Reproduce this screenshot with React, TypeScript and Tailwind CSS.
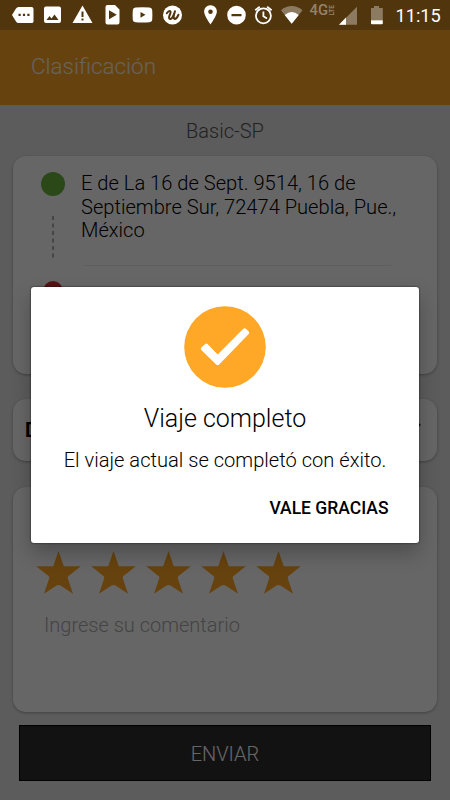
import React from 'react';

const STARS = [1, 2, 3, 4, 5];

/** Left side of the status bar: pending notifications */
const NotificationIcons: React.FC = () => (
  <svg width="185" height="30" viewBox="0 0 185 30" fill="white">
    <path fillRule="evenodd" d="M18.5 7H31.5Q33.5 7 33.5 9V21.500Q33.500 23 31.500 23H18.500Q17 23 16 21.500L12 15L16 8.500Q17 7 18.500 7ZM18.500 13.700V16H20.700V13.700ZM22.900 13.700V16H25.100V13.700ZM27.300 13.700V16H29.500V13.700Z" />
    <path fillRule="evenodd" d="M46 6.500H59Q61 6.500 61 8.500V21Q61 23 59 23H46Q44 23 44 21V8.500Q44 6.500 46 6.500ZM46.500 20H58.500L54.500 14.500L51.500 18.500L49.500 16Z" />
    <path fillRule="evenodd" d="M82.500 5.500L92.500 23H72.500ZM81.500 11.500V17H83.500V11.500ZM81.500 18.500V20.500H83.500V18.500Z" />
    <path fillRule="evenodd" d="M107.500 5H115L119.500 9.500V22.500Q119.500 24.500 117.500 24.500H107.500Q105.500 24.500 105.500 22.500V7Q105.500 5 107.500 5ZM109 10.300V19.200L116.800 14.800Z" />
    <path fillRule="evenodd" d="M135.500 7.500Q142.500 7 149.500 7.500Q152 7.700 152.200 10Q152.600 15 152.200 20Q152 22 149.500 22.200Q142.500 22.700 135.500 22.200Q133 22 132.800 20Q132.400 15 132.800 10Q133 7.700 135.500 7.500ZM140.500 12V17.700L145.500 14.800Z" />
    <circle cx="172.500" cy="15" r="9.500" />
    <path d="M166.800 13.300Q168.700 10.500 170.200 11.200Q171.200 12 169.600 15.200Q168.300 18.800 170.300 19.100Q172.500 18.800 175 11.200M175 11.200Q172.500 18.800 174.600 19.100Q176.800 18.700 178.400 14.800" fill="none" stroke="#50340d" strokeWidth="2" strokeLinecap="round" />
  </svg>
);

/** Right side of the status bar: system state */
const SystemIcons: React.FC = () => (
  <div className="flex h-[30px]">
    <svg width="105" height="30" viewBox="202 0 105 30" fill="white">
      <path fillRule="evenodd" d="M210.500 5.300A6.200 6.200 0 0 1 216.900 11.600C216.900 16 210.500 24.500 210.500 24.500S204.100 16 204.100 11.600A6.200 6.200 0 0 1 210.500 5.300ZM210.500 9.400A2.300 2.300 0 1 0 210.500 14A2.300 2.300 0 1 0 210.500 9.400Z" />
      <path fillRule="evenodd" d="M236.500 5.800A9.300 9.300 0 1 0 236.500 24.400A9.300 9.300 0 1 0 236.500 5.800ZM231.500 14H241.500V16.300H231.500Z" />
      <g fill="none" stroke="white" strokeWidth="1.800">
        <circle cx="263.400" cy="15.800" r="7.500" />
        <path d="M263.400 11.500V16.300L267 18.500M255.200 10.300L259.700 6.700M271.600 10.300L267.100 6.700" />
      </g>
      <path d="M281 10.200Q291.700 2 302.500 10.200L291.700 23.800Z" fillOpacity="0.350" />
      <path d="M284.700 15Q291.700 9 298.700 15L291.700 23.800Z" />
    </svg>
    <svg className="font-[Roboto]" width="28" height="30" viewBox="307 0 28 30" fill="white" fillOpacity="0.400">
      <text x="309.500" y="15.300" fontSize="15" fontWeight="500" textLength="18.500" lengthAdjust="spacingAndGlyphs">4G</text>
      <text transform="translate(334 15.500) rotate(-90)" fontSize="6.800" fontWeight="700" textLength="10.500" lengthAdjust="spacingAndGlyphs">LTE</text>
    </svg>
    <svg width="52" height="30" viewBox="335 0 52 30" fill="white">
      <path d="M357 6.800V24.800H339Z" fillOpacity="0.350" />
      <path d="M346 17.500V24.800H339Z" />
      <path d="M374 6H379V8H382.800V20.300H371V8H374Z" fillOpacity="0.350" />
      <path d="M371 20.300H382.800V23.300Q382.800 24.300 381.800 24.300H372Q371 24.300 371 23.300Z" />
    </svg>
    <span className="ml-[8.500px] w-[54.500px] whitespace-nowrap font-[Roboto] text-[18.200px] leading-[31px] text-white">11:15</span>
  </div>
);

const StarIcon: React.FC = () => (
  <svg width="45" height="43" viewBox="0 0 45 43" fill="#ffa525">
    <path d="M22.500 0L27.800 15.300H44.800L32.200 25.200Q31.500 26 31.800 27.200L37 42.800L24.500 34.500Q22.500 33.300 20.500 34.500L8 42.800L13.200 27.200Q13.500 26 12.800 25.200L0.200 15.300H17.200Z" />
  </svg>
);

const Card: React.FC<{ className: string; children?: React.ReactNode }> = ({ className, children }) => (
  <section className={`mx-[13px] shrink-0 rounded-[13px] bg-white shadow-[0_1px_3px_rgba(0,0,0,0.300)] ${className}`}>
    {children}
  </section>
);

const RatingScreen: React.FC = () => (
  <div className="flex h-full flex-col bg-[#e6e6e6] font-[Roboto] font-light">
    <div className="h-[30px] shrink-0 bg-[#cb8522]" />
    <header className="flex h-[75px] shrink-0 items-center bg-[#ffa525] pb-[2px] pl-[31px]">
      <h1 className="text-[22.400px] leading-none text-white/90">Clasificación</h1>
    </header>
    <p className="h-[51px] shrink-0 text-center text-[20px] leading-[52px] text-[#555]">Basic-SP</p>

    <Card className="flex h-[218px] pt-[16px]">
      <div className="ml-[28px] flex w-[24px] flex-col items-center">
        <span className="size-[24px] rounded-full bg-[#6db33f]" />
        <svg className="mt-[19px]" width="2" height="43" viewBox="0 0 2 43">
          <path d="M1 1V43" stroke="#777" strokeWidth="1.200" strokeDasharray="4 3.500" />
        </svg>
        <span className="mt-[23px] size-[20px] shrink-0 rounded-full bg-[#d92f31]" />
      </div>
      <div className="ml-[16px] w-[335px]">
        <p className="text-[20.120px] leading-[23.500px] text-black">
          E de La 16 de Sept. 9514, 16 de<br />
          Septiembre Sur, 72474 Puebla, Pue.,<br />
          México
        </p>
        <div className="mt-[22px] ml-[3px] h-px w-[307px] bg-[#eaeaea]" />
      </div>
    </Card>

    <Card className="mt-[25px] flex h-[62px] items-center justify-between pr-[16px] pl-[12px]">
      <span className="text-[20px] font-bold text-black">D</span>
      <svg className="mb-[9px]" width="12" height="10" viewBox="0 0 12 10" fill="none" stroke="black" strokeWidth="2">
        <path d="M1 3L6 9L11 3" />
      </svg>
    </Card>

    <Card className="mt-[26px] h-[225px] pt-[64px]">
      <div className="ml-[23px] flex gap-[10px]">
        {STARS.map((star) => <StarIcon key={star} />)}
      </div>
      <p className="mt-[18px] ml-[31px] text-[20px] leading-[26px] text-[#aaa]">Ingrese su comentario</p>
    </Card>

    <button className="mx-[19px] mt-[13px] h-[56px] shrink-0 border border-black bg-[#2d2e31] pt-[2px] text-[20px] text-white">
      ENVIAR
    </button>
  </div>
);

const TripDialog: React.FC = () => (
  <div role="dialog" className="mx-[31px] mt-[287px] flex h-[256px] flex-col items-center rounded-[3px] bg-white font-[Roboto] shadow-[0_0_2px_rgba(0,0,0,0.800),0_10px_20px_rgba(0,0,0,0.250)]">
    <svg className="mt-[18.500px] shrink-0" width="82" height="82" viewBox="0 0 82 82">
      <circle cx="41" cy="41" r="40.800" fill="#ffa726" />
      <path d="M17.300 41.500L21.200 38Q22.500 37 23.800 38.300L33.700 48.500L59.300 22.800Q60.700 21.500 62 22.800L64.700 25.500Q65.800 26.700 64.700 28L35.200 58.600Q33.700 60 32.200 58.600L17.300 44Q16.200 42.700 17.300 41.500Z" fill="white" />
    </svg>
    <h2 className="mt-[15.500px] text-[25px] leading-[32px] font-light text-black">Viaje completo</h2>
    <p className="mt-[12px] text-[20.120px] leading-[26px] font-light text-black">El viaje actual se completó con éxito.</p>
    <button className="mt-[23px] mr-[30.500px] self-end text-[17.500px] leading-[24px] font-medium text-black">VALE GRACIAS</button>
  </div>
);

export default function App() {
  return (
    <main className="relative h-[800px] w-[450px] overflow-hidden">
      <RatingScreen />
      <div className="absolute inset-0 bg-black/60">
        <TripDialog />
      </div>
      <div className="absolute inset-x-0 top-0 flex h-[30px] justify-between">
        <NotificationIcons />
        <SystemIcons />
      </div>
    </main>
  );
}
